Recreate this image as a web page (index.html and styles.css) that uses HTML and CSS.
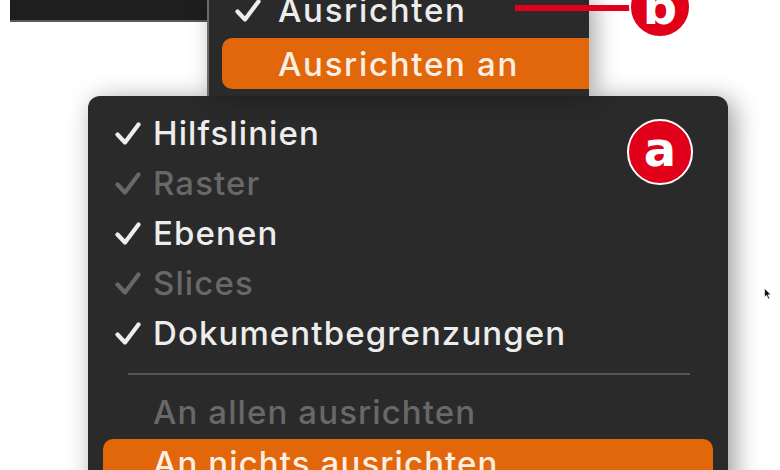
FILE: index.html
```html
<!DOCTYPE html>
<html lang="de">
<head>
    <meta charset="UTF-8">
    <meta name="viewport" content="width=device-width, initial-scale=1.0">
    <title>Ansicht-Menü</title>
    <link rel="stylesheet" href="styles.css">
</head>
<body>
    <div class="screen">
        <div class="top-row">
            <div class="toolbar"></div>
            <div class="submenu">
                <div class="sub-item">
                    <svg class="check" viewBox="0 0 26 23"><path d="M2.5 12.5 L10 20.5 L23.5 2.5"/></svg>
                    <span>Ausrichten</span>
                </div>
                <div class="sub-item active">
                    <span class="no-check"></span>
                    <span>Ausrichten an</span>
                </div>
            </div>
        </div>

        <div class="menu">
            <div class="item">
                <svg class="check" viewBox="0 0 26 23"><path d="M2.5 12.5 L10 20.5 L23.5 2.5"/></svg>
                <span>Hilfslinien</span>
            </div>
            <div class="item disabled">
                <svg class="check" viewBox="0 0 26 23"><path d="M2.5 12.5 L10 20.5 L23.5 2.5"/></svg>
                <span>Raster</span>
            </div>
            <div class="item">
                <svg class="check" viewBox="0 0 26 23"><path d="M2.5 12.5 L10 20.5 L23.5 2.5"/></svg>
                <span>Ebenen</span>
            </div>
            <div class="item disabled">
                <svg class="check" viewBox="0 0 26 23"><path d="M2.5 12.5 L10 20.5 L23.5 2.5"/></svg>
                <span>Slices</span>
            </div>
            <div class="item">
                <svg class="check" viewBox="0 0 26 23"><path d="M2.5 12.5 L10 20.5 L23.5 2.5"/></svg>
                <span>Dokumentbegrenzungen</span>
            </div>
            <div class="separator"></div>
            <div class="item disabled">
                <span class="no-check"></span>
                <span>An allen ausrichten</span>
            </div>
            <div class="item active">
                <span class="no-check"></span>
                <span>An nichts ausrichten</span>
            </div>
        </div>

        <!-- Markierungen -->
        <div class="pointer-line"></div>
        <div class="badge badge-b">b</div>
        <div class="badge badge-a">a</div>

        <svg class="cursor" viewBox="0 0 8 12"><path d="M0.5 0.5 L0.5 9 L2.6 7.2 L4.2 11 L5.6 10.4 L4.1 6.7 L7 6.7 Z"/></svg>
    </div>
</body>
</html>
```

FILE: styles.css
```css
body {
    margin: 0;
    background-color: #ffffff;
    font-family: 'Inter', 'Liberation Sans', sans-serif;
    overflow: hidden;
}
.screen {
    position: relative;
    width: 780px;
    height: 470px;
    overflow: hidden;
}
.top-row {
    display: flex;
    align-items: flex-start;
    height: 96px;
}
.toolbar {
    margin-left: 10px;
    width: 197px;
    height: 20px;
    background-color: #1e1e1e;
    border-bottom: 2px solid #5a5a5a;
}
.submenu {
    width: 380px;
    height: 96px;
    background-color: #2a2a2a;
    border-left: 2px solid #6b6b6b;
    box-shadow: 6px 0 22px rgba(0,0,0,0.35);
    overflow: hidden;
}
.sub-item {
    display: flex;
    align-items: center;
    gap: 17px;
    height: 50px;
    padding-left: 26px;
    font-size: 33px;
    font-weight: 500;
    letter-spacing: 1.7px;
    color: #ededed;
}
.sub-item:first-child {
    margin-top: -15px;
}
.sub-item.active {
    margin: 3px -12px 0 13px;
    height: 51px;
    padding-left: 13px;
    background-color: #e2660a;
    border-radius: 10px;
    color: #fbefe4;
}
.menu {
    margin-left: 88px;
    width: 640px;
    height: 400px;
    padding-top: 12px;
    box-sizing: border-box;
    background-color: #2a2a2a;
    border-radius: 12px 12px 0 0;
    box-shadow: 6px 4px 26px rgba(0,0,0,0.4);
}
.item {
    display: flex;
    align-items: center;
    gap: 12px;
    height: 50px;
    padding-left: 27px;
    font-size: 33px;
    font-weight: 500;
    letter-spacing: 1.1px;
    color: #ededed;
}
.item.disabled {
    color: #686868;
}
.item.active {
    margin: 2px 15px 0;
    padding-left: 12px;
    height: 48px;
    background-color: #e2660a;
    border-radius: 10px;
    color: #fbefe4;
}
.check {
    width: 26px;
    height: 23px;
    flex-shrink: 0;
}
.check path {
    fill: none;
    stroke: currentColor;
    stroke-width: 4.2;
    stroke-linecap: round;
    stroke-linejoin: round;
}
.no-check {
    width: 26px;
    flex-shrink: 0;
}
.separator {
    height: 2px;
    margin: 15px 38px 12px 40px;
    background-color: #555555;
}
.pointer-line {
    position: absolute;
    left: 515px;
    top: 5px;
    width: 120px;
    height: 6px;
    background-color: #e1001a;
}
.badge {
    position: absolute;
    display: flex;
    align-items: center;
    justify-content: center;
    border-radius: 50%;
    background-color: #e1001a;
    border: 2px solid #ffffff;
    color: #ffffff;
    font-family: 'DejaVu Sans', sans-serif;
    font-weight: bold;
    box-sizing: border-box;
}
.badge-a {
    left: 627px;
    top: 119px;
    width: 66px;
    height: 66px;
    font-size: 48px;
    padding-bottom: 6px;
}
.badge-b {
    left: 629px;
    top: -24px;
    width: 62px;
    height: 62px;
    font-size: 48px;
}
.cursor {
    position: absolute;
    left: 764px;
    top: 288px;
    width: 8px;
    height: 12px;
}
.cursor path {
    fill: #111111;
    stroke: #ffffff;
    stroke-width: 0.6;
}
```
